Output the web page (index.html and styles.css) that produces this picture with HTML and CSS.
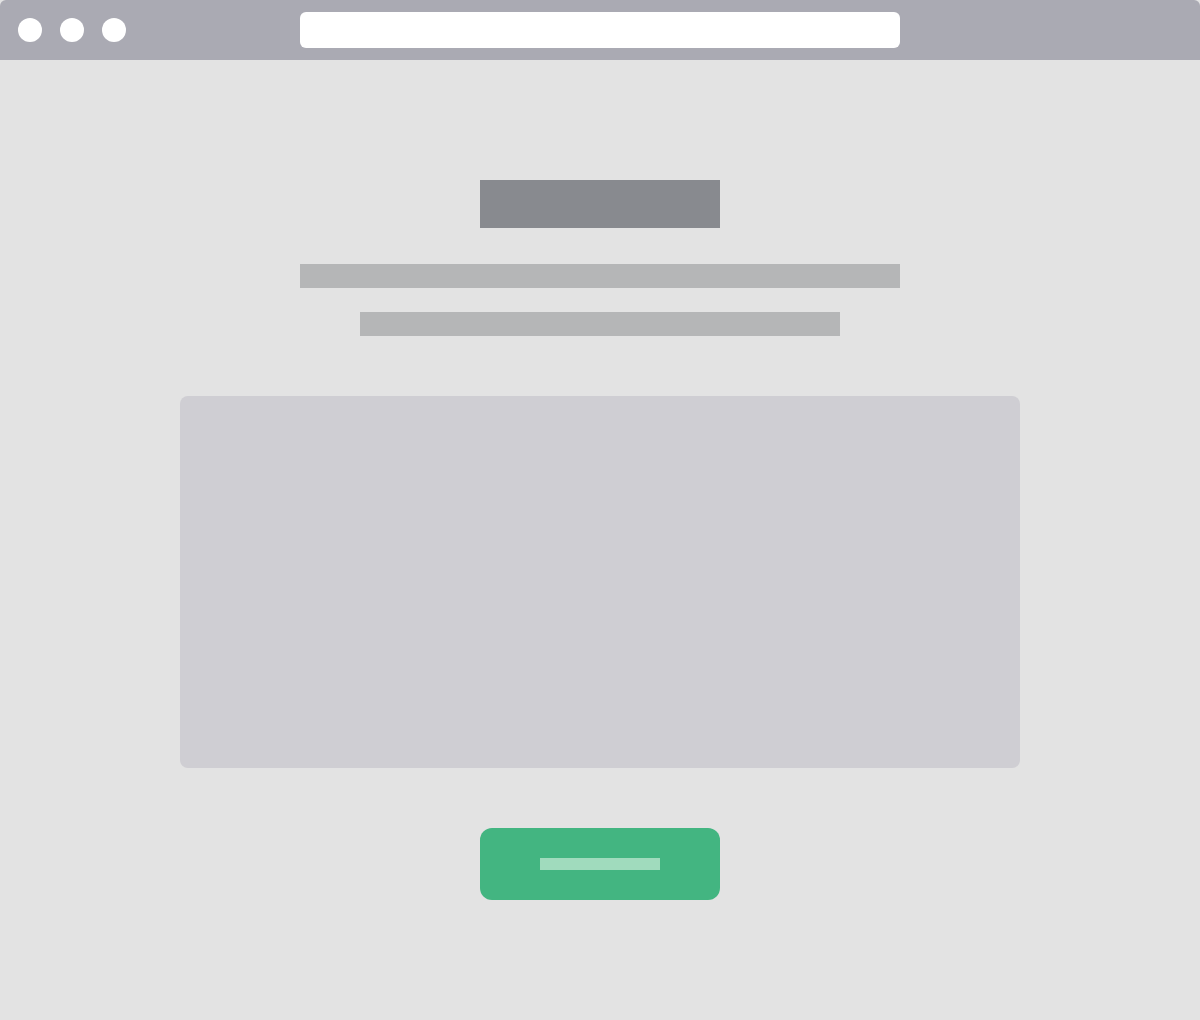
FILE: index.html
```html
<!DOCTYPE html>
<html lang="en">
<head>
    <meta charset="UTF-8">
    <meta name="viewport" content="width=device-width, initial-scale=1.0">
    <title>Wireframe</title>
    <link rel="stylesheet" href="styles.css">
</head>
<body>
    <div class="window">
        <div class="toolbar">
            <div class="dots">
                <span class="dot"></span>
                <span class="dot"></span>
                <span class="dot"></span>
            </div>
            <div class="address"></div>
        </div>
        <div class="content">
            <div class="title"></div>
            <div class="line line-wide"></div>
            <div class="line line-short"></div>
            <div class="panel"></div>
            <button class="cta"><span class="cta-label"></span></button>
        </div>
    </div>
</body>
</html>
```

FILE: styles.css
```css
body {
    margin: 0;
    font-family: "Liberation Sans", Arial, sans-serif;
    background-color: #e3e3e3;
}
.window {
    height: 1020px;
    background-color: #e3e3e3;
    border-radius: 6px 6px 0 0;
    overflow: hidden;
}
.toolbar {
    height: 60px;
    display: flex;
    align-items: center;
    background-color: #aaaab3;
    padding-left: 18px;
}
.dots {
    display: flex;
    gap: 18px;
}
.dot {
    width: 24px;
    height: 24px;
    border-radius: 50%;
    background-color: #fff;
}
.address {
    margin-left: 174px;
    width: 600px;
    height: 36px;
    border-radius: 6px;
    background-color: #fff;
}
.content {
    display: flex;
    flex-direction: column;
    align-items: center;
    padding-top: 120px;
}
.title {
    width: 240px;
    height: 48px;
    background-color: #888a8f;
}
.line {
    height: 24px;
    background-color: #b5b6b7;
}
.line-wide {
    width: 600px;
    margin-top: 36px;
}
.line-short {
    width: 480px;
    margin-top: 24px;
}
.panel {
    width: 840px;
    height: 372px;
    margin-top: 60px;
    border-radius: 8px;
    background-color: #cfced3;
}
.cta {
    width: 240px;
    height: 72px;
    margin-top: 60px;
    border: none;
    border-radius: 12px;
    background-color: #43b581;
    display: flex;
    align-items: center;
    justify-content: center;
    padding: 0;
    cursor: pointer;
}
.cta-label {
    width: 120px;
    height: 12px;
    background-color: #a0dbbd;
}
```
